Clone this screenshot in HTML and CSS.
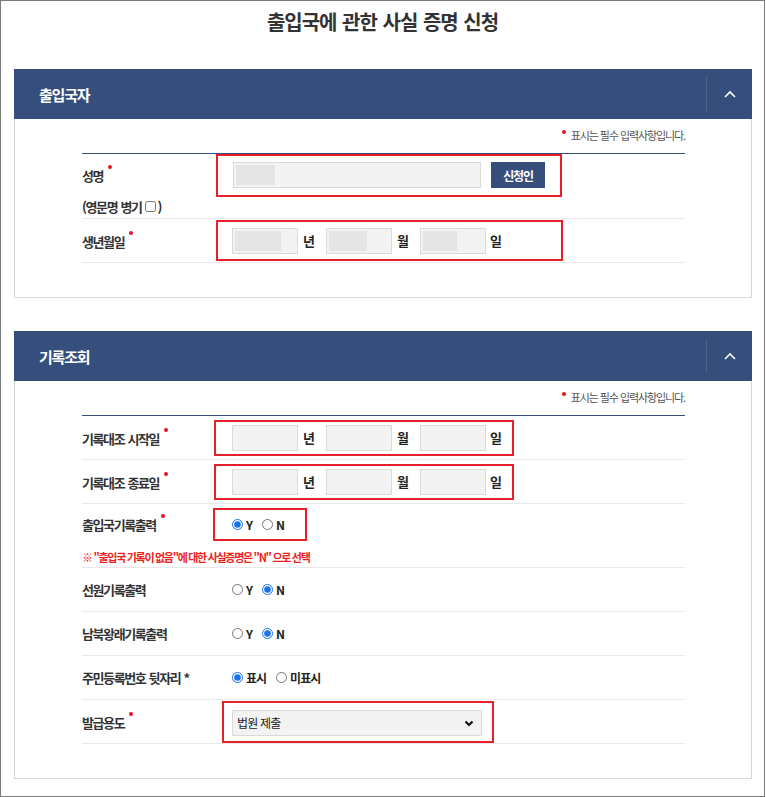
FILE: index.html
```html
<!DOCTYPE html>
<html lang="ko">
<head>
  <meta charset="utf-8">
  <title>출입국에 관한 사실 증명 신청</title>
  <link rel="stylesheet" href="styles.css">
</head>
<body>
  <div class="frame">
    <h1 class="page-title">출입국에 관한 사실 증명 신청</h1>

    <section class="panel">
      <div class="panel-head">
        <h2>출입국자</h2>
        <button class="toggle" type="button">
          <svg width="12" height="8" viewBox="0 0 12 8"><polyline points="1,7 6,2 11,7" fill="none" stroke="#fff" stroke-width="1.6"/></svg>
        </button>
      </div>
      <div class="panel-body">
        <p class="req-note"><span class="dot"></span>표시는 필수 입력사항입니다.</p>
        <div class="form-table">
          <div class="row row-name">
            <div class="label">성명<span class="dot"></span></div>
            <div class="mark mark-name">
              <span class="box box-name"><span class="mask mask-name"></span></span>
              <button class="btn" type="button">신청인</button>
            </div>
            <div class="label label-sub">(영문명 병기<input type="checkbox">)</div>
          </div>
          <div class="row">
            <div class="label">생년월일<span class="dot"></span></div>
            <div class="mark mark-birth">
              <span class="box"><span class="mask mask-y"></span></span><span class="unit">년</span>
              <span class="box"><span class="mask mask-m"></span></span><span class="unit">월</span>
              <span class="box"><span class="mask mask-d"></span></span><span class="unit">일</span>
            </div>
          </div>
        </div>
      </div>
    </section>

    <section class="panel panel-second">
      <div class="panel-head">
        <h2>기록조회</h2>
        <button class="toggle" type="button">
          <svg width="12" height="8" viewBox="0 0 12 8"><polyline points="1,7 6,2 11,7" fill="none" stroke="#fff" stroke-width="1.6"/></svg>
        </button>
      </div>
      <div class="panel-body">
        <p class="req-note"><span class="dot"></span>표시는 필수 입력사항입니다.</p>
        <div class="form-table">
          <div class="row">
            <div class="label">기록대조 시작일<span class="dot"></span></div>
            <div class="mark mark-date">
              <input class="box" type="text"><span class="unit">년</span>
              <input class="box" type="text"><span class="unit">월</span>
              <input class="box" type="text"><span class="unit">일</span>
            </div>
          </div>
          <div class="row">
            <div class="label">기록대조 종료일<span class="dot"></span></div>
            <div class="mark mark-date">
              <input class="box" type="text"><span class="unit">년</span>
              <input class="box" type="text"><span class="unit">월</span>
              <input class="box" type="text"><span class="unit">일</span>
            </div>
          </div>
          <div class="row row-tall">
            <div class="label">출입국기록출력<span class="dot"></span></div>
            <div class="mark mark-radio">
              <label class="opt"><input type="radio" name="immig" checked>Y</label>
              <label class="opt"><input type="radio" name="immig">N</label>
            </div>
            <p class="warn">※ "출입국 기록이 없음"에 대한 사실증명은 "N" 으로 선택</p>
          </div>
          <div class="row">
            <div class="label">선원기록출력</div>
            <div class="radios">
              <label class="opt"><input type="radio" name="seaman">Y</label>
              <label class="opt"><input type="radio" name="seaman" checked>N</label>
            </div>
          </div>
          <div class="row">
            <div class="label">남북왕래기록출력</div>
            <div class="radios">
              <label class="opt"><input type="radio" name="nk">Y</label>
              <label class="opt"><input type="radio" name="nk" checked>N</label>
            </div>
          </div>
          <div class="row">
            <div class="label">주민등록번호 뒷자리 *</div>
            <div class="radios">
              <label class="opt"><input type="radio" name="rrn" checked>표시</label>
              <label class="opt"><input type="radio" name="rrn">미표시</label>
            </div>
          </div>
          <div class="row">
            <div class="label">발급용도<span class="dot"></span></div>
            <div class="mark mark-select">
              <div class="select-wrap">
                <select class="select">
                  <option>법원 제출</option>
                </select>
                <svg class="select-arrow" width="10" height="7" viewBox="0 0 10 7"><polyline points="1.5,1.5 5,5 8.5,1.5" fill="none" stroke="#111" stroke-width="2.2"/></svg>
              </div>
            </div>
          </div>
        </div>
      </div>
    </section>
  </div>
</body>
</html>
```

FILE: styles.css
```css
body {
  margin: 0;
  font-family: "Noto Sans CJK KR", "Noto Sans", sans-serif;
  color: #333;
  background: #fff;
}

.frame {
  box-sizing: border-box;
  width: 765px;
  height: 797px;
  border: 1px solid #7b7b7b;
}

.page-title {
  margin: 0;
  padding-top: 8px;
  font-size: 20px;
  line-height: 26px;
  font-weight: 700;
  letter-spacing: -1px;
  word-spacing: 1px;
  text-align: center;
  color: #333;
}

.panel {
  margin: 34px 12px 0 13px;
}

.panel-second {
  margin-top: 33px;
}

.panel-head {
  display: flex;
  align-items: center;
  justify-content: space-between;
  height: 50px;
  padding-left: 25px;
  background-color: #354e7b;
}

.panel-head h2 {
  margin: 0;
  font-size: 15px;
  font-weight: 700;
  letter-spacing: -1.2px;
  color: #fff;
}

.toggle {
  display: flex;
  align-items: center;
  justify-content: center;
  width: 46px;
  height: 34px;
  padding: 0;
  background: none;
  border: none;
  border-left: 1px solid #4f6591;
}

.panel-body {
  padding: 9px 66px 34px 67px;
  border: 1px solid #d6d6d6;
  border-top: none;
}

.req-note {
  margin: 0;
  font-size: 11px;
  line-height: 14px;
  letter-spacing: -1.1px;
  color: #555;
  text-align: right;
}

.dot {
  display: inline-block;
  width: 4px;
  height: 4px;
  border-radius: 50%;
  background-color: #e8111b;
}

.req-note .dot {
  margin-right: 5px;
  vertical-align: 6px;
}

.label .dot {
  margin-left: 5px;
  vertical-align: 12px;
}

.form-table {
  margin-top: 11px;
  border-top: 1px solid #354e7b;
}

.row {
  box-sizing: border-box;
  display: grid;
  grid-template-columns: 134px 1fr;
  align-items: center;
  height: 44px;
  border-bottom: 1px solid #e8e8e8;
}

.row-name {
  height: 65px;
  grid-template-rows: 41px 23px;
}

.row-tall {
  height: 64px;
  grid-template-rows: 40px 23px;
}

.label {
  font-size: 13px;
  font-weight: 700;
  letter-spacing: -1.4px;
  word-spacing: 1px;
  color: #333;
  white-space: nowrap;
}

.label-sub {
  grid-column: 1 / -1;
  display: flex;
  align-items: center;
}

.label-sub input {
  width: 11px;
  height: 11px;
  margin: 0 2px 0 3px;
}

.mark {
  box-sizing: border-box;
  display: flex;
  align-items: center;
  border: 2px solid #e8202a;
}

.mark-name {
  width: 346px;
  height: 43px;
  padding: 6px 14px 7px 15px;
  align-self: start;
}

.mark-birth {
  width: 347px;
  height: 41px;
  padding: 0 0 0 14px;
}

.mark-date {
  width: 300px;
  height: 36px;
  margin-left: -2px;
  padding-left: 16px;
}

.mark-radio {
  width: 94px;
  height: 33px;
  margin-left: -3px;
  padding-left: 17px;
}

.mark-select {
  width: 272px;
  height: 42px;
  margin-left: 6px;
  padding: 7px 10px 5px 8px;
}

.box {
  box-sizing: border-box;
  display: flex;
  align-items: center;
  width: 66px;
  height: 26px;
  margin: 0;
  padding: 0 2px;
  background-color: #f3f3f3;
  border: 1px solid #dadada;
  font-family: inherit;
}

.box-name {
  width: 248px;
}

.mask {
  display: block;
  height: 20px;
  background-color: #e5e5e5;
}

.mask-name { width: 39px; }
.mask-y { width: 46px; }
.mask-m { width: 38px; }
.mask-d { width: 34px; }

.unit {
  width: 12px;
  margin: 0 11px 0 5px;
  font-size: 13px;
  font-weight: 700;
  color: #222;
}

.unit:last-child {
  margin: 0 0 0 4px;
}

.btn {
  width: 54px;
  height: 26px;
  margin-left: 10px;
  padding: 0;
  background-color: #354e7b;
  border: none;
  color: #fff;
  font-family: inherit;
  font-size: 12px;
  font-weight: 700;
  letter-spacing: -1.2px;
}

.radios {
  display: flex;
  align-items: center;
  padding-left: 16px;
}

.mark-radio .opt,
.radios .opt {
  display: flex;
  align-items: center;
  margin-right: 10px;
  font-size: 12px;
  font-weight: 700;
  letter-spacing: -1px;
  color: #222;
}

.opt input {
  width: 11px;
  height: 11px;
  margin: 0 3px 0 0;
  accent-color: #1a73e8;
}

.warn {
  grid-column: 1 / -1;
  align-self: start;
  margin: 0;
  padding-top: 6px;
  font-size: 11px;
  line-height: 14px;
  font-weight: 700;
  letter-spacing: -1.3px;
  color: #f01e1e;
}

.select-wrap {
  position: relative;
  width: 250px;
}

.select {
  display: block;
  box-sizing: border-box;
  width: 250px;
  height: 26px;
  padding: 0 4px;
  background-color: #f3f3f3;
  border: 1px solid #dadada;
  border-radius: 0;
  appearance: none;
  font-family: inherit;
  font-size: 12px;
  letter-spacing: -0.8px;
  color: #222;
}

.select-arrow {
  position: absolute;
  right: 8px;
  top: 10px;
}
```
